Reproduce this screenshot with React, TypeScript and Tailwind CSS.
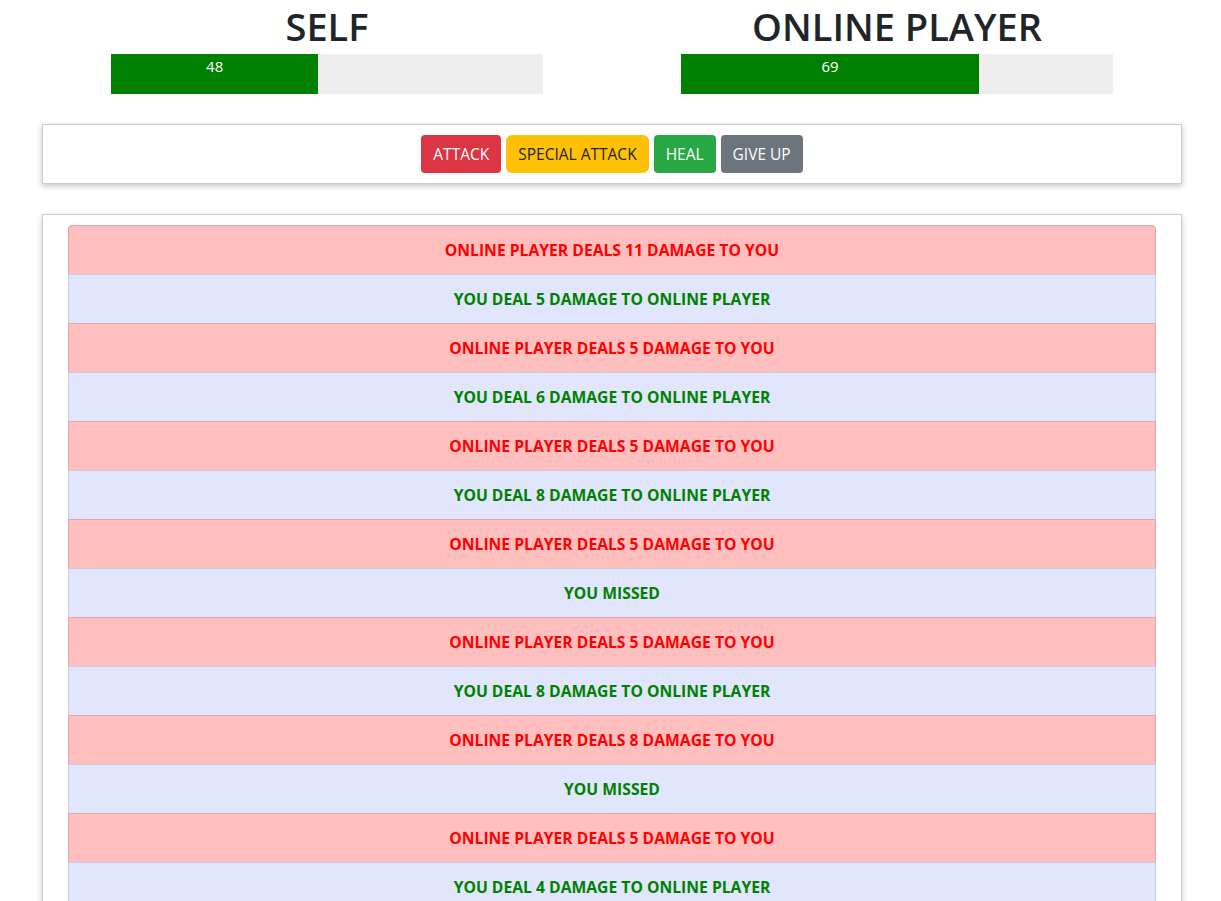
import React from "react";

type LogEntry = { who: "monster" | "player"; text: string };

const log: LogEntry[] = [
  { who: "monster", text: "ONLINE PLAYER DEALS 11 DAMAGE TO YOU" },
  { who: "player", text: "YOU DEAL 5 DAMAGE TO ONLINE PLAYER" },
  { who: "monster", text: "ONLINE PLAYER DEALS 5 DAMAGE TO YOU" },
  { who: "player", text: "YOU DEAL 6 DAMAGE TO ONLINE PLAYER" },
  { who: "monster", text: "ONLINE PLAYER DEALS 5 DAMAGE TO YOU" },
  { who: "player", text: "YOU DEAL 8 DAMAGE TO ONLINE PLAYER" },
  { who: "monster", text: "ONLINE PLAYER DEALS 5 DAMAGE TO YOU" },
  { who: "player", text: "YOU MISSED" },
  { who: "monster", text: "ONLINE PLAYER DEALS 5 DAMAGE TO YOU" },
  { who: "player", text: "YOU DEAL 8 DAMAGE TO ONLINE PLAYER" },
  { who: "monster", text: "ONLINE PLAYER DEALS 8 DAMAGE TO YOU" },
  { who: "player", text: "YOU MISSED" },
  { who: "monster", text: "ONLINE PLAYER DEALS 5 DAMAGE TO YOU" },
  { who: "player", text: "YOU DEAL 4 DAMAGE TO ONLINE PLAYER" },
];

function HealthPanel({ name, health }: { name: string; health: number }) {
  return (
    <div className="px-[15px]">
      <h1 className="text-center text-[38px] leading-[48px] pt-[2px] font-semibold text-[#212529] mb-[4px]">
        {name}
      </h1>
      <div className="mx-auto w-4/5 h-10 bg-[#eeeeee]">
        <div
          className="h-full bg-[#008000] text-white text-center text-[15px] leading-6"
          style={{ width: `${health}%` }}
        >
          {health}
        </div>
      </div>
    </div>
  );
}

export default function App() {
  return (
    <div
      className="min-h-screen bg-white"
      style={{ fontFamily: '"Open Sans", "Noto Sans", sans-serif' }}
    >
      <div className="w-[1140px] ml-[42px]">
        <section className="grid grid-cols-2">
          <HealthPanel name="SELF" health={48} />
          <HealthPanel name="ONLINE PLAYER" health={69} />
        </section>

        <section className="mt-[30px] border border-[#cccccc] shadow-[0_2px_6px_rgba(0,0,0,0.25)] p-[10px] flex justify-center gap-[5px]">
          <button className="h-[38px] px-3 pt-px rounded bg-[#dc3545] text-white text-[15.5px]">
            ATTACK
          </button>
          <button className="h-[38px] px-3 pt-px rounded-[6px] bg-[#ffc107] text-[#212529] text-[15.5px]">
            SPECIAL ATTACK
          </button>
          <button className="h-[38px] px-3 pt-px rounded bg-[#28a745] text-white text-[15.5px]">
            HEAL
          </button>
          <button className="h-[38px] px-3 pt-px rounded bg-[#6c757d] text-white text-[15.5px]">
            GIVE UP
          </button>
        </section>

        <section className="mt-[30px] border border-[#cccccc] shadow-[0_2px_6px_rgba(0,0,0,0.2)] pt-[10px] px-[25px] pb-[10px]">
          <ul className="flex flex-col">
            {log.map((entry, i) => (
              <li
                key={i}
                className={
                  entry.who === "monster"
                    ? "h-[50px] pt-[2px] -mt-px first:mt-0 first:rounded-t border border-[#e0a5a8] bg-[#ffbfbf] text-[#ff0000] font-bold text-[15.7px] flex items-center justify-center"
                    : "h-[50px] pt-[2px] -mt-px border border-[#c8cce0] bg-[#e1e6fd] text-[#008000] font-bold text-[15.7px] flex items-center justify-center"
                }
              >
                {entry.text}
              </li>
            ))}
          </ul>
        </section>
      </div>
    </div>
  );
}
